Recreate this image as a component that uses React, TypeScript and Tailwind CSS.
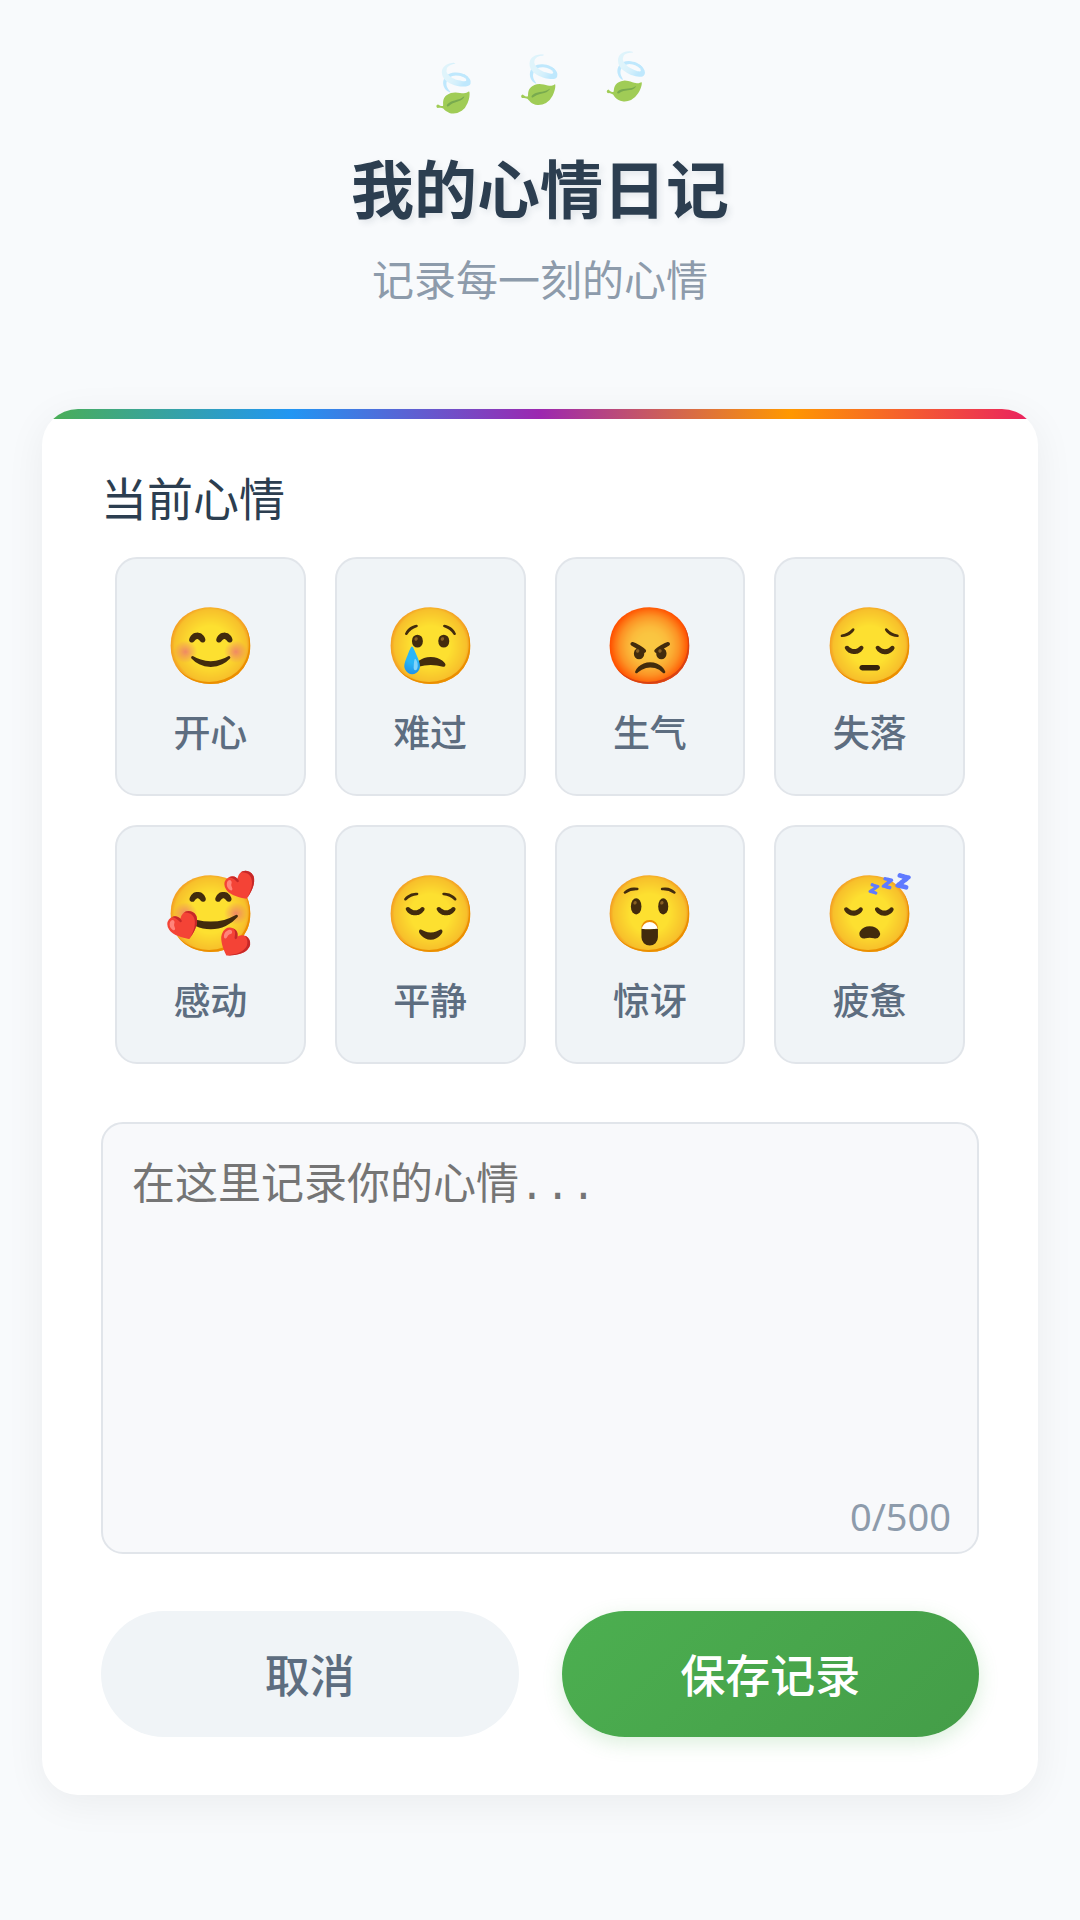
import { useState } from "react";

type Mood = {
  id: string;
  emoji: string;
  label: string;
};

const MAX_LENGTH = 500;

const moods: Mood[] = [
  { id: "happy", emoji: "😊", label: "开心" },
  { id: "sad", emoji: "😢", label: "难过" },
  { id: "angry", emoji: "😡", label: "生气" },
  { id: "down", emoji: "😔", label: "失落" },
  { id: "touched", emoji: "🥰", label: "感动" },
  { id: "calm", emoji: "😌", label: "平静" },
  { id: "surprised", emoji: "😲", label: "惊讶" },
  { id: "tired", emoji: "😴", label: "疲惫" },
];

export default function App() {
  const [selected, setSelected] = useState<string | null>(null);
  const [text, setText] = useState("");

  function reset() {
    setSelected(null);
    setText("");
  }

  return (
    <div
      lang="zh-CN"
      className="min-h-screen bg-[#f8fafc] px-[42px] pt-11 pb-[120px] font-['Noto_Sans_CJK_SC',sans-serif] text-[#2c3e50]"
    >
      <header className="flex flex-col items-center text-center">
        {/* Floating leaves */}
        <div className="flex gap-[30px] text-[46px] leading-[80px] opacity-80" aria-hidden="true">
          <span>🍃</span>
          <span className="-translate-y-2 rotate-5">🍃</span>
          <span className="-translate-y-3 rotate-10">🍃</span>
        </div>
        <h1 className="mt-5 text-[63px] leading-[84px] font-bold [text-shadow:3px_3px_6px_rgba(44,62,80,0.1)]">
          我的心情日记
        </h1>
        <p className="mt-5 text-[42px] leading-[60px] text-[#8d9bab]">记录每一刻的心情</p>
      </header>

      <main className="mt-[101px] overflow-hidden rounded-[36px] bg-white shadow-[0_8px_40px_rgba(0,0,0,0.06)]">
        {/* Rainbow strip */}
        <div className="h-[10px] bg-[linear-gradient(90deg,#4caf50,#2196f3,#9c27b0,#ff9800,#e91e63)]" />

        <form className="px-[59px] pt-12 pb-[58px]" onSubmit={(e) => e.preventDefault()}>
          <h2 className="text-[46px] leading-[58px]">当前心情</h2>

          <div className="mt-8 grid grid-cols-4 gap-[29px] px-[14px]">
            {moods.map((mood) => (
              <button
                key={mood.id}
                type="button"
                aria-pressed={selected === mood.id}
                onClick={() => setSelected(mood.id)}
                className={`flex h-[239px] flex-col items-center justify-center rounded-[22px] border-2 transition ${
                  selected === mood.id ? "border-[#4caf50] bg-[#e8f5e9]" : "border-[#e1e5ea] bg-[#f0f4f7]"
                }`}
              >
                <span className="text-[75px] leading-[88px]">{mood.emoji}</span>
                <span className="mt-5 text-[37px] leading-[54px] font-medium text-[#5d6d80]">{mood.label}</span>
              </button>
            ))}
          </div>

          <div className="relative mt-[58px]">
            <textarea
              aria-label="心情记录"
              value={text}
              maxLength={MAX_LENGTH}
              onChange={(e) => setText(e.target.value)}
              placeholder="在这里记录你的心情..."
              className="block h-[432px] w-full resize-none rounded-[22px] border-2 border-[#e1e5ea] bg-[#f8f9fb] px-[29px] py-8 font-['Liberation_Mono','Noto_Sans_CJK_SC',monospace] text-[43px] leading-[64px] outline-none placeholder:text-[#757575] focus:border-[#4caf50]"
            />
            <span className="absolute right-7 bottom-3 font-['Noto_Sans',sans-serif] text-[38px] leading-[52px] text-[#8d9bab]">
              {text.length}/{MAX_LENGTH}
            </span>
          </div>

          <div className="mt-[57px] grid grid-cols-2 gap-[43px] text-[45px] leading-[66px] font-medium">
            <button type="button" onClick={reset} className="rounded-full bg-[#f0f4f7] py-[30px] text-[#5d6d80]">
              取消
            </button>
            <button
              type="submit"
              className="rounded-full bg-linear-135 from-[#4caf50] to-[#449d48] py-[30px] text-white shadow-[0_6px_20px_rgba(76,175,80,0.2)]"
            >
              保存记录
            </button>
          </div>
        </form>
      </main>
    </div>
  );
}
